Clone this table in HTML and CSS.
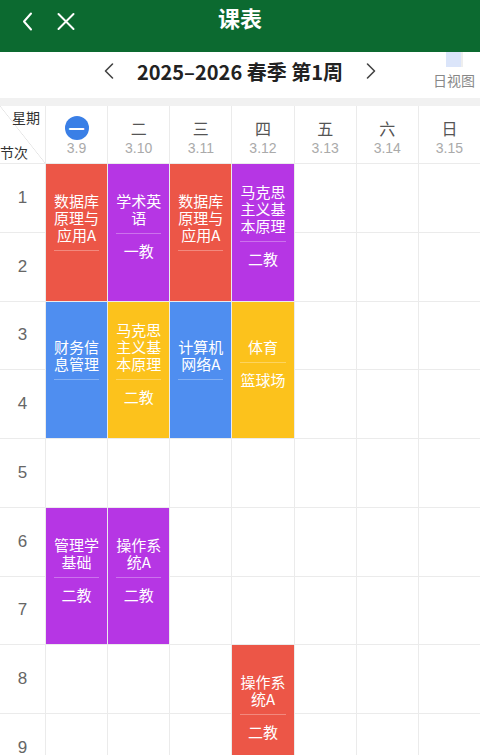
FILE: index.html
```html
<!DOCTYPE html>
<html lang="zh-CN">
<head>
  <meta charset="UTF-8">
  <meta name="viewport" content="width=device-width, initial-scale=1.0">
  <title>课表</title>
  <link rel="stylesheet" href="styles.css">
</head>
<body>
  <header class="topbar">
    <div class="topbar-left">
      <svg class="icon" width="24" height="24" viewBox="0 0 24 24">
        <path d="M15 3.5 L8 11.5 L15 19.5" fill="none" stroke="#fff" stroke-width="2" stroke-linecap="round" stroke-linejoin="round"/>
      </svg>
      <svg class="icon" width="24" height="24" viewBox="0 0 24 24">
        <path d="M4.5 4 L19.5 19 M19.5 4 L4.5 19" fill="none" stroke="#fff" stroke-width="2" stroke-linecap="round"/>
      </svg>
    </div>
    <h1 class="title">课表</h1>
    <div></div>
  </header>

  <div class="weeknav">
    <div></div>
    <div class="week">
      <svg width="12" height="18" viewBox="0 0 12 18">
        <path d="M9.5 2 L2.5 9 L9.5 16" fill="none" stroke="#444" stroke-width="1.6" stroke-linecap="round" stroke-linejoin="round"/>
      </svg>
      <span class="week-text">2025–2026 春季 第1周</span>
      <svg width="12" height="18" viewBox="0 0 12 18">
        <path d="M2.5 2 L9.5 9 L2.5 16" fill="none" stroke="#444" stroke-width="1.6" stroke-linecap="round" stroke-linejoin="round"/>
      </svg>
    </div>
    <div class="dayview">
      <span class="dayview-icon"></span>
      <span class="dayview-text">日视图</span>
    </div>
  </div>

  <div class="strip"></div>

  <div class="table" id="table">
    <div class="corner">
      <span class="corner-top">星期</span>
      <span class="corner-bottom">节次</span>
    </div>
    <div class="day"><span class="day-name today">一</span><span class="day-date">3.9</span></div>
    <div class="day"><span class="day-name">二</span><span class="day-date">3.10</span></div>
    <div class="day"><span class="day-name">三</span><span class="day-date">3.11</span></div>
    <div class="day"><span class="day-name">四</span><span class="day-date">3.12</span></div>
    <div class="day"><span class="day-name">五</span><span class="day-date">3.13</span></div>
    <div class="day"><span class="day-name">六</span><span class="day-date">3.14</span></div>
    <div class="day"><span class="day-name">日</span><span class="day-date">3.15</span></div>
  </div>

  <script>
    const courses = [
      { day: 1, start: 1, name: '数据库原理与应用A', room: '', color: 'red' },
      { day: 2, start: 1, name: '学术英语', room: '一教', color: 'purple' },
      { day: 3, start: 1, name: '数据库原理与应用A', room: '', color: 'red' },
      { day: 4, start: 1, name: '马克思主义基本原理', room: '二教', color: 'purple' },
      { day: 1, start: 3, name: '财务信息管理', room: '', color: 'blue' },
      { day: 2, start: 3, name: '马克思主义基本原理', room: '二教', color: 'yellow' },
      { day: 3, start: 3, name: '计算机网络A', room: '', color: 'blue' },
      { day: 4, start: 3, name: '体育', room: '篮球场', color: 'yellow' },
      { day: 1, start: 6, name: '管理学基础', room: '二教', color: 'purple' },
      { day: 2, start: 6, name: '操作系统A', room: '二教', color: 'purple' },
      { day: 4, start: 8, name: '操作系统A', room: '二教', color: 'red' }
    ];

    const table = document.getElementById('table');

    // empty grid cells, placed explicitly so courses can sit on top
    for (let row = 1; row <= 9; row++) {
      const label = document.createElement('div');
      label.className = 'period';
      label.textContent = row;
      label.style.gridArea = (row + 1) + ' / 1';
      table.appendChild(label);
      for (let d = 1; d <= 7; d++) {
        const cell = document.createElement('div');
        cell.className = 'cell';
        cell.style.gridArea = (row + 1) + ' / ' + (d + 1);
        table.appendChild(cell);
      }
    }

    courses.forEach(c => {
      const block = document.createElement('div');
      block.className = 'course ' + c.color;
      block.style.gridColumn = (c.day + 1) + ' / span 1';
      block.style.gridRow = (c.start + 1) + ' / span 2';
      block.innerHTML =
        '<div class="course-name">' + c.name + '</div>' +
        '<div class="course-line"></div>' +
        '<div class="course-room">' + c.room + '</div>';
      table.appendChild(block);
    });
  </script>
</body>
</html>
```

FILE: styles.css
```css
body {
  margin: 0;
  font-family: "Noto Sans CJK SC", "Noto Sans", sans-serif;
  background-color: #fff;
  color: #222;
}

.topbar {
  display: grid;
  grid-template-columns: 1fr auto 1fr;
  height: 52px;
  background-color: #0c6a30;
  color: #fff;
}

.topbar-left {
  display: flex;
  gap: 14px;
  padding: 10px 0 0 16px;
}

.title {
  margin: 0;
  padding-top: 3px;
  font-size: 22px;
  line-height: 28px;
  font-weight: 700;
}

.weeknav {
  display: grid;
  grid-template-columns: 1fr auto 1fr;
  height: 46px;
}

.week {
  display: flex;
  align-items: center;
  gap: 22px;
  height: 32px;
  padding-top: 3px;
}

.week-text {
  font-size: 20px;
  font-weight: 700;
  color: #222;
}

.dayview {
  justify-self: end;
  display: flex;
  flex-direction: column;
  align-items: center;
  padding-right: 5px;
}

.dayview-icon {
  width: 15px;
  height: 15px;
  background-color: #dbe5fa;
  border-right: 2px solid #eeeeee;
}

.dayview-text {
  margin-top: 4px;
  font-size: 14px;
  line-height: 18px;
  color: #888;
}

.strip {
  height: 8px;
  background-color: #f1f1f1;
}

.table {
  display: grid;
  grid-template-columns: 45px repeat(7, 1fr);
  grid-template-rows: 57px repeat(9, 67.75px);
  gap: 1px;
  background-color: #ebebeb;
}

.corner {
  display: flex;
  flex-direction: column;
  justify-content: space-between;
  padding: 3px 5px 2px 0;
  font-size: 14px;
  line-height: 17px;
  color: #333;
  background: #fff linear-gradient(to top right, transparent calc(50% - 0.6px), #e2e2e2, transparent calc(50% + 0.6px));
}

.corner-top {
  text-align: right;
}

.day {
  display: flex;
  flex-direction: column;
  align-items: center;
  justify-content: center;
  padding-top: 5px;
  background-color: #fff;
}

.day-name {
  display: flex;
  align-items: center;
  justify-content: center;
  height: 22px;
  font-size: 16px;
  color: #555;
}

.day-name.today {
  width: 24px;
  height: 24px;
  margin: -1px 0;
  border-radius: 50%;
  background-color: #3a7fe6;
  color: #fff;
  font-weight: 700;
}

.day-date {
  font-family: "Liberation Sans", sans-serif;
  font-size: 14px;
  line-height: 18px;
  color: #aaa;
}

.period {
  display: flex;
  align-items: center;
  justify-content: center;
  background-color: #fff;
  font-family: "Liberation Sans", sans-serif;
  font-size: 17px;
  color: #666;
}

.cell {
  background-color: #fff;
}

.course {
  display: flex;
  flex-direction: column;
  justify-content: center;
  padding: 0 6px 14px;
  color: #fff;
  text-align: center;
  font-size: 15px;
  line-height: 17px;
  overflow: hidden;
}

.course-name {
  margin-bottom: 7px;
}

.course-line {
  height: 1px;
  margin: 0 2px;
  background-color: rgba(255, 255, 255, 0.3);
}

.course-room {
  margin-top: 8px;
}

.red {
  background-color: #ec5647;
}

.purple {
  background-color: #b636e4;
}

.blue {
  background-color: #4f8ef0;
}

.yellow {
  background-color: #fcc21c;
}
```
